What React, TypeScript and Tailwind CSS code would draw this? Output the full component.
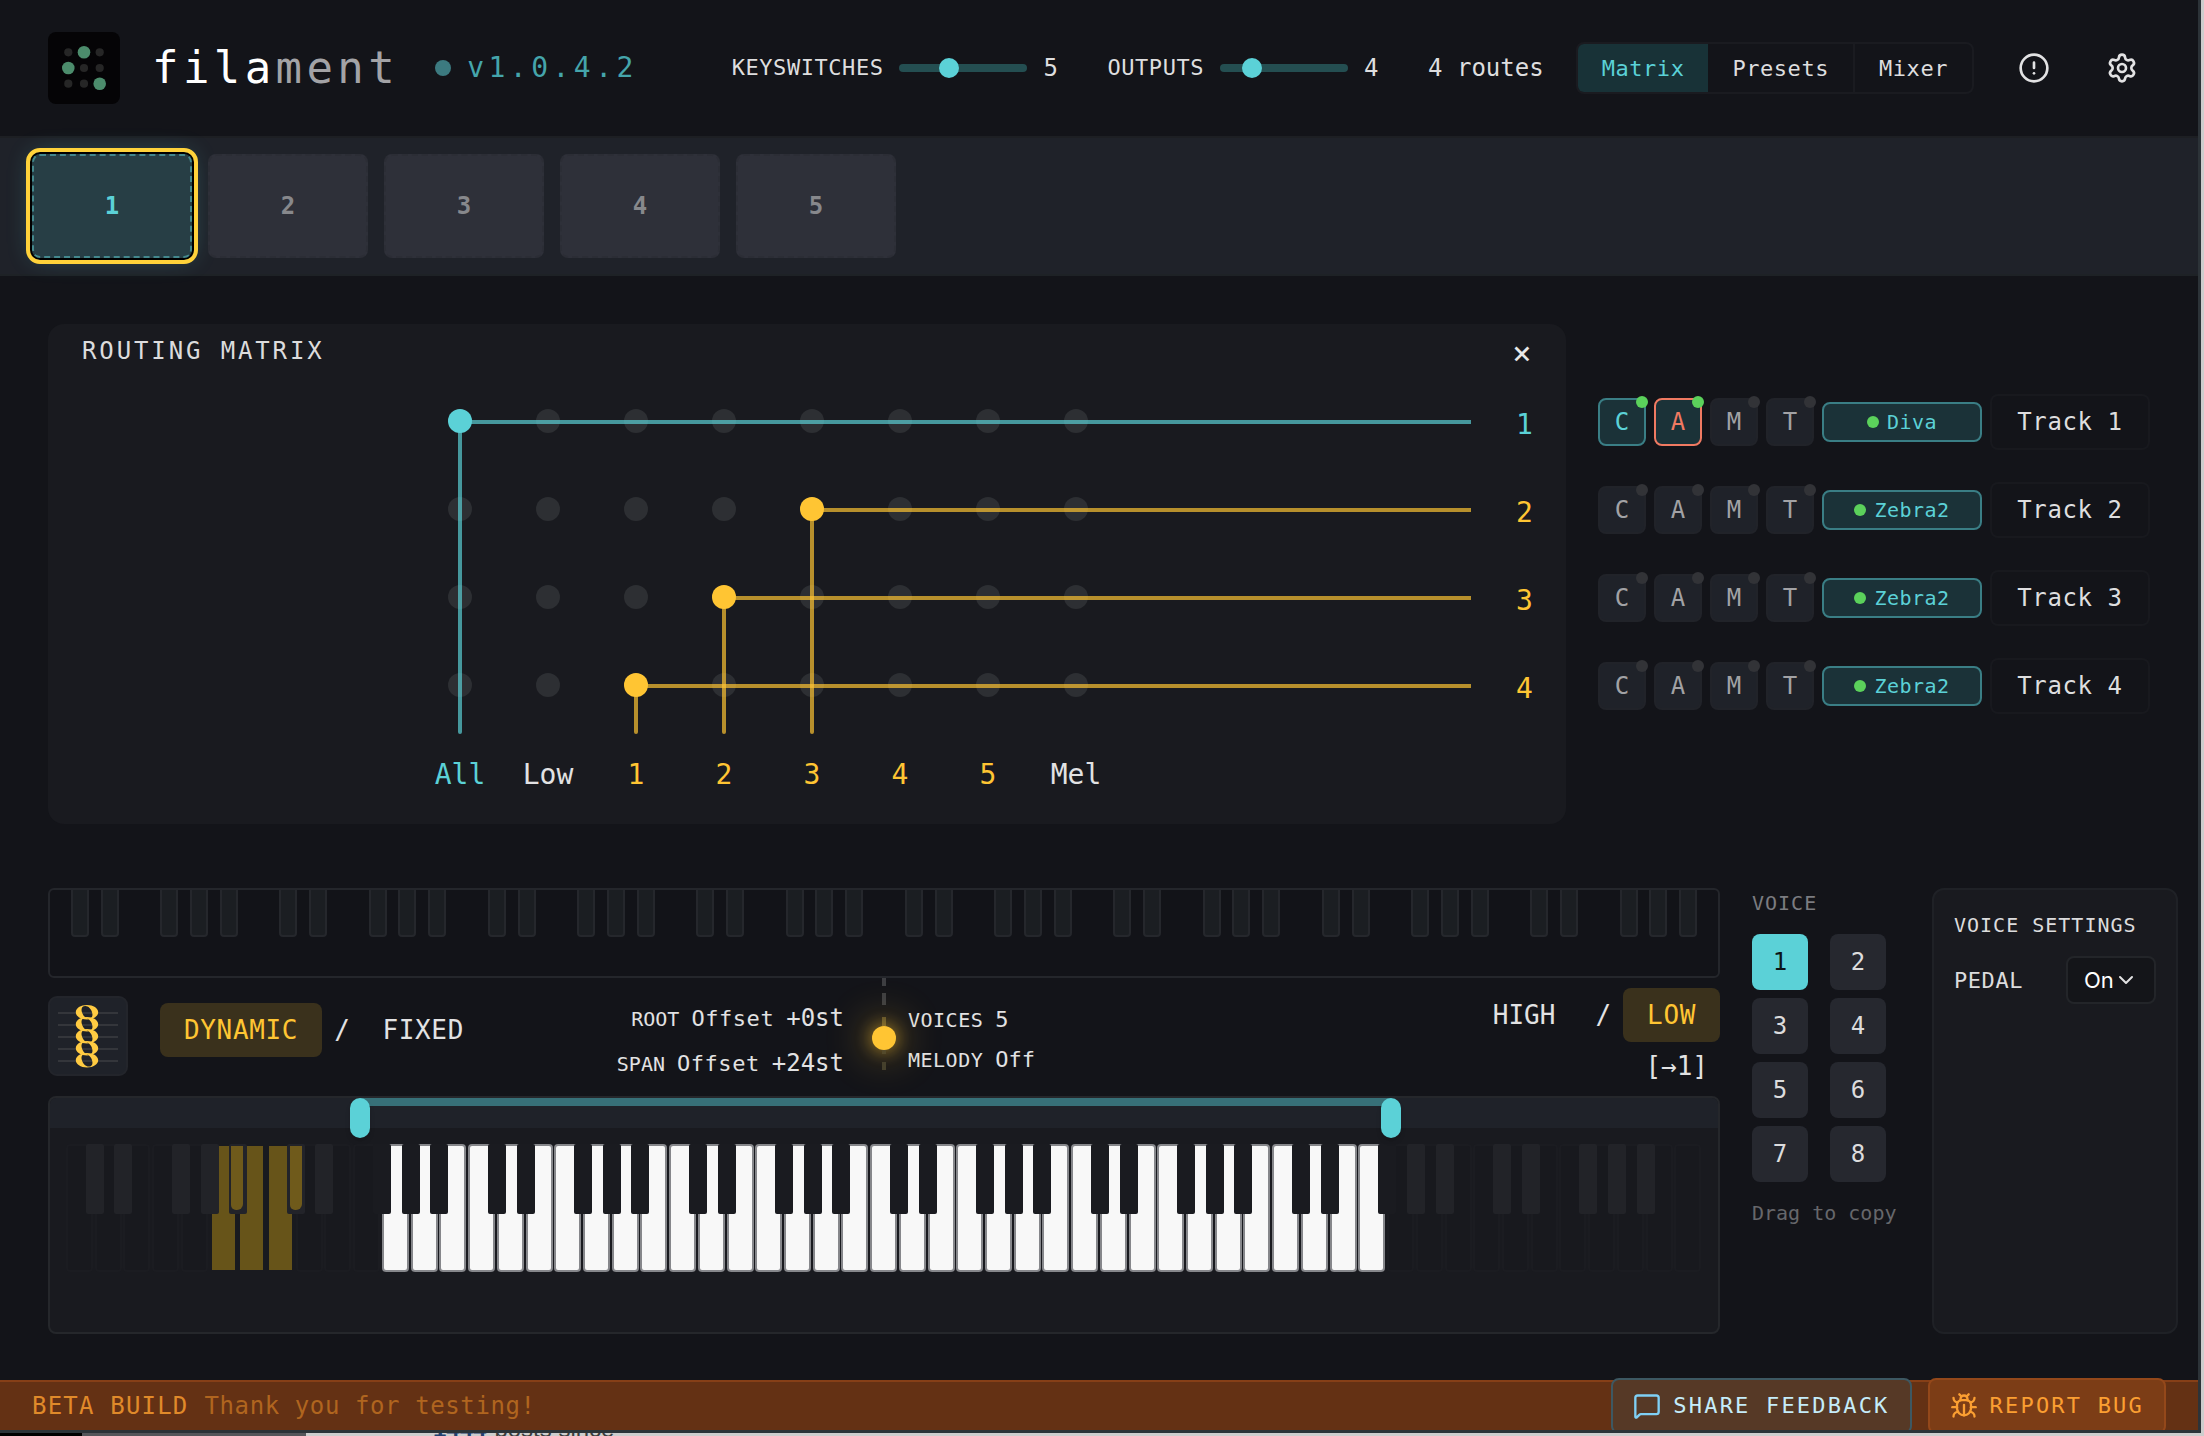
import React from "react";
import { Bug, ChevronDown, CircleAlert, MessageSquare, Settings } from "lucide-react";

const TEAL = "#5bd1d7";
const GOLD = "#ffc533";

const routes = [
  { row: 0, col: 0, color: TEAL },
  { row: 1, col: 4, color: GOLD },
  { row: 2, col: 3, color: GOLD },
  { row: 3, col: 2, color: GOLD },
];

const columns = [
  { label: "All", tone: "text-[#5bd1d7]" },
  { label: "Low", tone: "text-[#e2e2e3]" },
  { label: "1", tone: "text-[#ffc533]" },
  { label: "2", tone: "text-[#ffc533]" },
  { label: "3", tone: "text-[#ffc533]" },
  { label: "4", tone: "text-[#ffc533]" },
  { label: "5", tone: "text-[#ffc533]" },
  { label: "Mel", tone: "text-[#e2e2e3]" },
];

const tracks = [
  { name: "Track 1", plugin: "Diva", live: true },
  { name: "Track 2", plugin: "Zebra2", live: false },
  { name: "Track 3", plugin: "Zebra2", live: false },
  { name: "Track 4", plugin: "Zebra2", live: false },
];

const hasBlack = (boundary: number) => [1, 2, 4, 5, 6].includes(boundary % 7);

function Logo() {
  const lit = ["1-0", "0-1", "2-2"];
  const cells = [0, 1, 2].flatMap((y) => [0, 1, 2].map((x) => ({ x, y })));
  return (
    <svg viewBox="0 0 72 72" className="size-[72px] shrink-0" aria-hidden="true">
      <rect width="72" height="72" rx="8" fill="#050406" />
      {cells.map(({ x, y }) => {
        const on = lit.includes(`${x}-${y}`);
        return (
          <circle
            key={`${x}-${y}`}
            cx={20.3 + x * 15.7}
            cy={20.3 + y * 15.7}
            r={on ? 6.3 : 4.1}
            fill={on ? "#4c8c6c" : "#262626"}
          />
        );
      })}
    </svg>
  );
}

function HeaderSlider(props: { label: string; id: string; max: number; value: number }) {
  return (
    <div className="flex items-center gap-4">
      <label htmlFor={props.id} className="text-[22px] leading-8 tracking-wide text-[#dededf]">
        {props.label}
      </label>
      <input
        id={props.id}
        type="range"
        min={1}
        max={props.max}
        defaultValue={props.value}
        className="h-2 w-32 appearance-none rounded-full bg-[#244e51] [&::-webkit-slider-thumb]:size-5 [&::-webkit-slider-thumb]:appearance-none [&::-webkit-slider-thumb]:rounded-full [&::-webkit-slider-thumb]:bg-[#5bd1d7]"
      />
      <span className="w-8 text-2xl text-[#dededf]">{props.value}</span>
    </div>
  );
}

function Header() {
  return (
    <header className="flex h-[138px] items-center border-b-2 border-[#1d1f23] px-12">
      <Logo />
      <h1 className="ml-8 text-[44px] leading-none font-extralight tracking-widest text-white">
        fila<span className="text-[#a3a3a6]">ment</span>
      </h1>
      <div className="ml-9 flex items-center gap-4">
        <span className="size-4 rounded-full bg-[#3c7a80]" />
        <span className="text-[28px] leading-8 tracking-[0.16em] text-[#45a5ab]">v1.0.4.2</span>
      </div>
      <div className="ml-auto flex items-center gap-8">
        <HeaderSlider label="KEYSWITCHES" id="keyswitches" max={12} value={5} />
        <HeaderSlider label="OUTPUTS" id="outputs" max={16} value={4} />
        <span className="text-2xl text-[#dededf]">4 routes</span>
        <nav className="flex h-[52px] overflow-hidden rounded-lg border-2 border-[#1a1b20] text-[22px] tracking-wide text-[#dededf]">
          <button className="bg-[#183237] px-6 text-[#5bd1d7]">Matrix</button>
          <button className="border-r-2 border-[#1a1b20] px-6">Presets</button>
          <button className="px-6">Mixer</button>
        </nav>
        <button aria-label="Alerts" className="flex size-14 items-center justify-center text-[#e2e2e3]">
          <CircleAlert size={32} strokeWidth={2} />
        </button>
        <button aria-label="Settings" className="flex size-14 items-center justify-center text-[#e2e2e3]">
          <Settings size={32} strokeWidth={2} />
        </button>
      </div>
    </header>
  );
}

function KeyswitchBar() {
  return (
    <section className="flex gap-4 border-b-2 border-[#1e2226] bg-[#1f2229] px-8 py-4">
      <button className="h-[104px] w-40 rounded-lg border-2 border-dashed border-[#43888d] bg-[#273e45] text-2xl font-bold text-[#5bd1d7] shadow-[0_0_24px_rgba(91,209,215,0.3)] ring-2 ring-black outline-4 outline-offset-2 outline-[#ffd23a]">
        1
      </button>
      {[2, 3, 4, 5].map((n) => (
        <button
          key={n}
          className="h-[104px] w-40 rounded-lg border-2 border-dashed border-[#2b2d35] bg-[#2e3039] text-2xl font-bold text-[#87888c]"
        >
          {n}
        </button>
      ))}
    </section>
  );
}

function MatrixGrid() {
  const x = (col: number) => 44 + col * 88;
  const y = (row: number) => 44 + row * 88;
  return (
    <svg className="h-[357px] min-w-0 flex-1" aria-label="Routing matrix grid">
      {[0, 1, 2, 3].flatMap((row) =>
        columns.map((c, col) => <circle key={`${row}-${c.label}`} cx={x(col)} cy={y(row)} r="12" fill="#2d2f33" />)
      )}
      {routes.map((r) => (
        <g key={r.row} stroke={r.color} strokeWidth="4" fill={r.color}>
          <line x1={x(r.col)} y1={y(r.row) + 1} x2="100%" y2={y(r.row) + 1} strokeOpacity="0.69" />
          <line x1={x(r.col)} y1={y(r.row)} x2={x(r.col)} y2="355" strokeOpacity="0.69" strokeLinecap="round" />
          <circle cx={x(r.col)} cy={y(r.row)} r="12" stroke="none" />
        </g>
      ))}
    </svg>
  );
}

function RoutingMatrix() {
  return (
    <section className="min-w-0 flex-1 rounded-2xl bg-[#191a1f] pb-2">
      <div className="flex h-[53px] items-center justify-between pr-8 pl-[34px]">
        <h2 className="text-2xl tracking-[0.12em] text-[#dcdcdd]">ROUTING MATRIX</h2>
        <button aria-label="Close matrix" className="w-6 pt-1 text-center text-[32px] leading-8 text-[#e8e8e9]">
          ×
        </button>
      </div>
      <div className="flex pl-[368px]">
        <MatrixGrid />
        <div className="w-[95px] pt-1 pl-3 text-center text-[28px]">
          {[1, 2, 3, 4].map((n) => (
            <div
              key={n}
              className={
                n === 1
                  ? "flex h-[88px] items-center justify-center text-[#5bd1d7]"
                  : "flex h-[88px] items-center justify-center text-[#ffc533]"
              }
            >
              {n}
            </div>
          ))}
        </div>
      </div>
      <div className="flex h-[82px] items-center pl-[368px] text-[28px]">
        {columns.map((c) => (
          <span key={c.label} className={`w-[88px] text-center ${c.tone}`}>
            {c.label}
          </span>
        ))}
      </div>
    </section>
  );
}

function ModeButton({ letter, state }: { letter: string; state: "off" | "teal" | "coral" }) {
  const look = {
    off: "border-[#212329] bg-[#1f2229] text-[#a2a2a5]",
    teal: "border-[#3a7e85] bg-[#1b3238] text-[#5bd1d7]",
    coral: "border-[#f07a62] bg-[#1b3238] text-[#f07a62]",
  }[state];
  return (
    <button className={`relative size-12 rounded-lg border-2 text-2xl leading-none ${look}`}>
      {letter}
      <span
        className={
          state === "off"
            ? "absolute -top-1 -right-1 size-3 rounded-full bg-[#323337]"
            : "absolute -top-1 -right-1 size-3 rounded-full bg-[#5bd15b]"
        }
      />
    </button>
  );
}

function TrackList() {
  return (
    <section className="pt-[54px]">
      {tracks.map((t) => (
        <div key={t.name} className="flex h-[88px] items-center gap-2">
          <ModeButton letter="C" state={t.live ? "teal" : "off"} />
          <ModeButton letter="A" state={t.live ? "coral" : "off"} />
          <ModeButton letter="M" state="off" />
          <ModeButton letter="T" state="off" />
          <button className="flex h-10 w-40 items-center justify-center gap-2 rounded-lg border-2 border-[#3a7e85] bg-[#1b3238] text-xl tracking-wide text-[#5bd1d7]">
            <span className="size-3 rounded-full bg-[#5bd15b]" />
            {t.plugin}
          </button>
          <button className="h-14 w-40 rounded-lg border-2 border-[#18191e] text-2xl tracking-wide text-[#dededf]">
            {t.name}
          </button>
        </div>
      ))}
    </section>
  );
}

function OverviewKeys() {
  const step = 1668 / 56;
  return (
    <div className="overflow-hidden rounded-md border-2 border-[#24262b] bg-[#121318]">
      <svg viewBox="0 0 1668 86" className="block w-full" aria-hidden="true">
        {Array.from({ length: 55 }, (_, i) => i + 1)
          .filter(hasBlack)
          .map((b) => (
            <rect
              key={b}
              x={Math.round(b * step - 8)}
              y="-6"
              width="16"
              height="52"
              rx="3"
              fill="#1b1e22"
              stroke="#25272c"
              strokeWidth="2"
            />
          ))}
      </svg>
    </div>
  );
}

function PianoKeys() {
  const step = 1637 / 57;
  const whites = Array.from({ length: 57 }, (_, i) => i);
  const isPlayable = (i: number) => i >= 11 && i <= 45;
  const isHeld = (i: number) => i >= 5 && i <= 7;
  return (
    <svg viewBox="0 0 1636 128" className="block w-full" aria-hidden="true">
      {whites.map((i) => {
        const x = Math.round(i * step);
        if (isHeld(i)) return <rect key={i} x={x + 2} y="2" width="23" height="124" fill="#675419" />;
        return (
          <rect
            key={i}
            x={x + 1}
            y="1"
            width="25"
            height="126"
            rx="3"
            fill={isPlayable(i) ? "#f8f8f8" : "#18191e"}
            stroke={isPlayable(i) ? "#86878b" : "#1b1c21"}
            strokeWidth="2"
          />
        );
      })}
      {whites.filter(hasBlack).map((b) => {
        const x = Math.round(b * step - 9);
        if (b === 6 || b === 8) {
          const inset = b === 6 ? x + 2 : x + 3;
          return (
            <g key={b}>
              <rect x={x} y="0" width="18" height="70" rx="2" fill="#222329" />
              <path d={`M${inset} 2h12v58a6 6 0 0 1-6 6h-1a5 5 0 0 1-5-5z`} fill="#6f5a1b" />
            </g>
          );
        }
        const dark = b >= 11 && b <= 46;
        return <rect key={b} x={x} y="0" width="18" height="70" rx="2" fill={dark ? "#1a1b20" : "#222328"} />;
      })}
    </svg>
  );
}

function Keybed() {
  return (
    <div className="relative h-[238px] rounded-lg border-2 border-[#25272b] bg-[#191a1f]">
      <div className="h-[30px] rounded-t-md bg-[#1f2229]" />
      <div className="px-4 pt-4">
        <PianoKeys />
      </div>
      <div className="absolute top-0 right-[19.6%] left-[18.6%] h-2 bg-[#377078]" />
      <button
        aria-label="Range start"
        className="absolute top-0 left-[18%] h-10 w-5 rounded-full bg-[#5bd1d7] shadow-md"
      />
      <button
        aria-label="Range end"
        className="absolute top-0 right-[19%] h-10 w-5 rounded-full bg-[#5bd1d7] shadow-md"
      />
    </div>
  );
}

function ChordIcon() {
  return (
    <svg viewBox="0 0 80 80" className="size-20 shrink-0" aria-hidden="true">
      <rect x="1" y="1" width="78" height="78" rx="8" fill="#1f2229" stroke="#23252b" strokeWidth="2" />
      {[0, 1, 2, 3, 4].map((i) => (
        <rect key={i} x="10" y={16 + i * 12} width="60" height="2" fill="#34363b" />
      ))}
      {[0, 1, 2, 3, 4].map((i) => (
        <g key={i} transform={`translate(39 ${16.3 + i * 12})`}>
          <path
            fillRule="evenodd"
            fill="#ffcb42"
            d="M0-7.2C6.4-7.2 11.2-4 11.2 0S6.4 7.2 0 7.2-11.2 4-11.2 0-6.4-7.2 0-7.2zM-1.6-6.2C-5-6.2-6-3.6-5.2-.6-4.2 3.4-1.2 6.2 1.7 6.2 5 6.2 6 3.6 5.2.6 4.2-3.4 1.3-6.2-1.6-6.2z"
          />
        </g>
      ))}
    </svg>
  );
}

function RangeControls() {
  return (
    <div className="relative grid h-[118px] grid-cols-2 text-[#e2e2e3]">
      <div className="absolute left-1/2 flex h-full -translate-x-1/2 flex-col items-center">
        <span className="h-2 w-1 bg-[#3d3e42]" />
        <span className="mt-[7px] h-3 w-1 bg-[#3d3e42]" />
        <span className="mt-3 h-[9px] w-1 bg-[#544a2b]" />
        <button
          aria-label="Split point"
          className="size-6 shrink-0 rounded-full bg-[#ffc533] shadow-[0_0_40px_8px_rgba(255,197,51,0.3),0_0_16px_2px_rgba(255,197,51,0.45)]"
        />
        <span className="h-1 w-1 bg-[#544a2b]" />
        <span className="mt-2 h-2 w-1 bg-[#45402c]" />
      </div>
      <div className="flex items-start pt-[18px] pr-10">
        <ChordIcon />
        <div className="ml-8 flex items-center pt-[7px] text-[26px] leading-[54px] tracking-wide">
          <button className="rounded-lg bg-[#3a311c] px-6 text-[#ffc533]">DYNAMIC</button>
          <span className="mr-2 ml-3">/</span>
          <button className="px-6">FIXED</button>
        </div>
        <div className="ml-auto text-right leading-[44px] whitespace-nowrap">
          <div className="flex items-baseline justify-end gap-3 text-[22px]">
            <span className="text-xl">ROOT</span>
            <span className="tracking-wide">Offset</span>
            <span className="text-2xl leading-[44px]">+0st</span>
          </div>
          <div className="flex items-baseline justify-end gap-3 text-[22px]">
            <span className="text-xl">SPAN</span>
            <span className="tracking-wide">Offset</span>
            <span className="text-2xl leading-[44px]">+24st</span>
          </div>
        </div>
      </div>
      <div className="flex items-start justify-between pl-6">
        <div className="pt-[22px] leading-10">
          <div className="flex items-baseline gap-3 text-[22px] leading-10">
            <span className="text-xl leading-10 tracking-wide">VOICES</span>
            <span>5</span>
          </div>
          <div className="flex items-baseline gap-3 text-[22px] leading-10">
            <span className="text-xl leading-10 tracking-wide">MELODY</span>
            <span>Off</span>
          </div>
        </div>
        <div className="flex flex-col items-end pt-2.5 text-[26px] leading-[54px]">
          <div className="flex">
            <button className="px-6">HIGH</button>
            <span className="mr-3 ml-4">/</span>
            <button className="rounded-lg bg-[#3a311c] px-6 tracking-wide text-[#ffc533]">LOW</button>
          </div>
          <span className="pr-3 text-[26px] leading-[48px]">[→1]</span>
        </div>
      </div>
    </div>
  );
}

function VoicePicker() {
  return (
    <section className="w-[148px] whitespace-nowrap">
      <h2 className="text-xl leading-[30px] tracking-wider text-[#7b7c80]">VOICE</h2>
      <div className="mt-4 grid w-fit grid-cols-2 gap-x-[22px] gap-y-2">
        {[1, 2, 3, 4, 5, 6, 7, 8].map((n) => (
          <button
            key={n}
            className={
              n === 1
                ? "size-14 rounded-lg bg-[#5bd1d7] text-2xl text-[#0b1417]"
                : "size-14 rounded-lg bg-[#26282f] text-2xl text-[#dcdcdd]"
            }
          >
            {n}
          </button>
        ))}
      </div>
      <p className="mt-4 text-xl leading-[30px] text-[#66676b]">Drag to copy</p>
    </section>
  );
}

function VoiceSettings() {
  return (
    <section className="w-[246px] rounded-xl border-2 border-[#1f2126] bg-[#191a1f] px-5 py-5 whitespace-nowrap">
      <h2 className="text-xl leading-[30px] tracking-wider text-[#dcdcdd]">VOICE SETTINGS</h2>
      <div className="mt-4 flex items-center justify-between">
        <label htmlFor="pedal" className="text-[22px] tracking-wide text-[#dcdcdd]">
          PEDAL
        </label>
        <div className="relative">
          <select
            id="pedal"
            defaultValue="On"
            className="h-12 w-[90px] appearance-none rounded-lg border-2 border-[#232529] bg-[#141519] pl-4 font-['Inter',sans-serif] text-[22px] text-white"
          >
            <option>On</option>
            <option>Off</option>
          </select>
          <ChevronDown
            size={24}
            strokeWidth={2}
            className="pointer-events-none absolute top-3 right-[18px] text-[#e2e2e3]"
          />
        </div>
      </div>
    </section>
  );
}

function Footer() {
  return (
    <footer className="flex h-[50px] items-start gap-4 border-t-2 border-[#863f17] bg-[#643114] px-8 text-2xl leading-[48px]">
      <p className="flex gap-4 whitespace-nowrap">
        <strong className="font-normal tracking-wider text-[#e08a2a]">BETA BUILD</strong>
        <span className="tracking-wide text-[#b0651f]">Thank you for testing!</span>
      </p>
      <button className="-mt-1 ml-auto flex h-14 items-center gap-3 rounded-lg border-2 border-[#3d5862] bg-[#563926] px-5 text-[22px] tracking-widest text-[#c5ecfa]">
        <MessageSquare size={28} strokeWidth={2} className="text-[#7fd0f5]" />
        SHARE FEEDBACK
      </button>
      <button className="-mt-1 flex h-14 items-center gap-3 rounded-lg border-2 border-[#94481a] bg-[#7c3d16] px-5 text-[22px] tracking-widest text-[#fb9f32]">
        <Bug size={28} strokeWidth={2} />
        REPORT BUG
      </button>
    </footer>
  );
}

export default function App() {
  return (
    <div className="flex h-screen flex-col overflow-hidden bg-[#cdcdcd] pr-[3px] font-['DejaVu_Sans_Mono',monospace]">
      <div className="flex min-h-0 flex-1 flex-col overflow-hidden border-r-[3px] border-b-[3px] border-[#2c3338] bg-[#131419]">
        <Header />
        <KeyswitchBar />
        <main className="flex min-h-0 flex-1 flex-col gap-16 pt-12">
          <div className="flex gap-8 px-12">
            <RoutingMatrix />
            <TrackList />
          </div>
          <div className="flex gap-8 pr-5 pl-12">
            <div className="min-w-0 flex-1">
              <OverviewKeys />
              <RangeControls />
              <Keybed />
            </div>
            <VoicePicker />
            <VoiceSettings />
          </div>
        </main>
        <Footer />
      </div>
      <div className="flex h-[3px] items-end gap-2 overflow-hidden font-['Liberation_Sans',sans-serif] text-2xl leading-[14px] text-[#3c3c3c]">
        <span className="-mr-2 h-[3px] w-[82px] bg-black" />
        <span className="mr-[119px] h-[3px] w-[224px] bg-[#55565a]" />
        <a href="#posts" className="font-bold text-[#23406e]">
          1444
        </a>
        <span>posts since</span>
      </div>
    </div>
  );
}
